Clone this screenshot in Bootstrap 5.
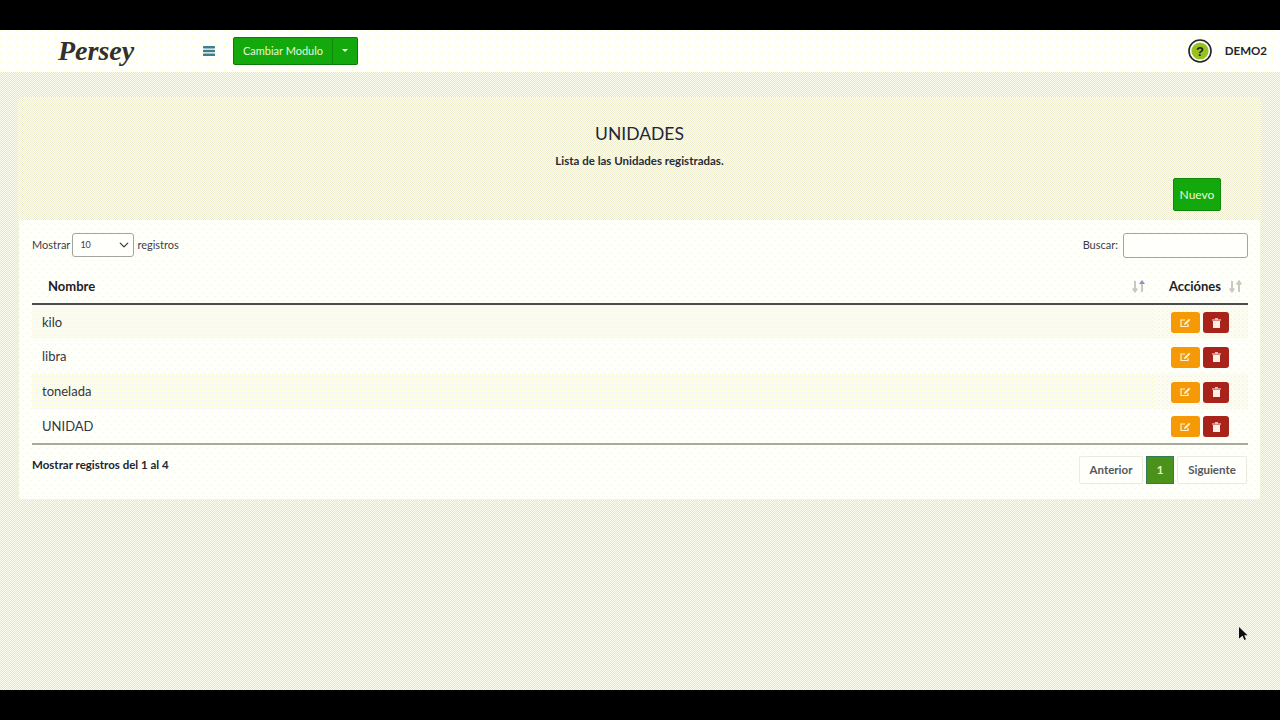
<!DOCTYPE html>
<html lang="es">

<head>
    <meta charset="UTF-8">
    <meta name="viewport" content="width=device-width, initial-scale=1.0">
    <title>Unidades</title>
    <link href="https://cdn.jsdelivr.net/npm/bootstrap@5.3.3/dist/css/bootstrap.min.css" rel="stylesheet">
    <script src="https://cdn.jsdelivr.net/npm/bootstrap@5.3.3/dist/js/bootstrap.bundle.min.js"></script>
    <style>
        html, body { height: 720px; overflow: hidden; }
        body {
            font-family: "Lato", "Noto Sans", sans-serif;
            font-size: 12px;
            color: #2c2f3a;
            background: #000;
            position: relative;
        }
        .black-bar { height: 30px; background: #000; }
        /* the reference is a dithered gif, these tiles copy its speckle */
        .top-nav {
            height: 42px; padding: 0 13px 0 58px;
            background: #fffffd url("data:image/svg+xml,%3Csvg xmlns='http://www.w3.org/2000/svg' width='8' height='8' shape-rendering='crispEdges'%3E%3Crect width='1' height='1' fill='%23fcfcb0'/%3E%3C/svg%3E");
        }
        .brand-text {
            font-family: "Liberation Serif", serif;
            font-style: italic; font-weight: 700;
            font-size: 28px; line-height: 42px; color: #33312c;
            width: 145px;
        }
        .menu-icon { width: 12px; height: 10px; margin-right: 18px; }
        .btn-module {
            background: #13a80c; border: 1px solid #0c7a08; color: #e9f7da;
            font-size: 11px; height: 28px; width: 100px; padding: 0; border-radius: 2px 0 0 2px;
            line-height: 26px;
        }
        .btn-caret {
            background: #13a80c; border: 1px solid #0c7a08; border-left-color: #0e8a09; color: #fff;
            height: 28px; width: 26px; padding: 0 0 2px; border-radius: 0 2px 2px 0; font-size: 10px;
        }
        .btn-caret::after { margin: 0; vertical-align: 2px; }
        .user-name { font-weight: 700; font-size: 11.5px; color: #22242c; margin-left: 13px; }
        .page-area {
            height: 618px; padding: 25px 19px 0 18px;
            background: #eeeedc url("data:image/svg+xml,%3Csvg xmlns='http://www.w3.org/2000/svg' width='4' height='4' shape-rendering='crispEdges'%3E%3Crect width='4' height='4' fill='%23fcfcee'/%3E%3Cg fill='%23e4e4d8'%3E%3Crect x='1' width='1' height='1'/%3E%3Crect y='1' width='1' height='1'/%3E%3Crect x='3' y='2' width='1' height='1'/%3E%3Crect x='2' y='3' width='1' height='1'/%3E%3C/g%3E%3Cg fill='%23eeec9c'%3E%3Crect x='3' width='1' height='1'/%3E%3Crect x='2' y='1' width='1' height='1'/%3E%3Crect x='1' y='2' width='1' height='1'/%3E%3Crect y='3' width='1' height='1'/%3E%3C/g%3E%3C/svg%3E");
        }
        .title-block {
            height: 123px; position: relative; padding-top: 25px; border-radius: 3px 3px 0 0;
            background: #f1f1e0 url("data:image/svg+xml,%3Csvg xmlns='http://www.w3.org/2000/svg' width='4' height='4' shape-rendering='crispEdges'%3E%3Crect width='4' height='4' fill='%23fdfdf2'/%3E%3Cg fill='%23e8e8e4'%3E%3Crect x='1' width='1' height='1'/%3E%3Crect y='1' width='1' height='1'/%3E%3Crect x='3' y='2' width='1' height='1'/%3E%3Crect x='2' y='3' width='1' height='1'/%3E%3C/g%3E%3Cg fill='%23f3f1c0'%3E%3Crect x='3' width='1' height='1'/%3E%3Crect x='2' y='1' width='1' height='1'/%3E%3Crect x='1' y='2' width='1' height='1'/%3E%3Crect y='3' width='1' height='1'/%3E%3C/g%3E%3C/svg%3E");
        }
        .page-title { font-size: 17.5px; font-weight: 400; line-height: 24px; margin: 0 0 6px; color: #23263a; }
        .page-sub { font-size: 11.5px; font-weight: 700; line-height: 17px; margin: 0; color: #2a2c38; }
        .btn-new {
            position: absolute; right: 40px; top: 81px;
            width: 48px; height: 33px; padding: 0; font-size: 12px;
            background: #13a80c; border: 1px solid #0c8a08; color: #e9f7da; border-radius: 2px;
        }
        .list-panel {
            height: 280px; border-radius: 0 0 4px 4px;
            border: 1px solid #f3f3d8; border-top: 0; padding: 13px 13px 0;
            background: #fffffa url("data:image/svg+xml,%3Csvg xmlns='http://www.w3.org/2000/svg' width='8' height='8' shape-rendering='crispEdges'%3E%3Crect width='1' height='1' fill='%23fcfca8'/%3E%3Crect x='4' y='4' width='1' height='1' fill='%23fcfca8'/%3E%3C/svg%3E");
        }
        .tools-row { height: 24px; font-size: 11px; color: #3b3e4a; width: 1216px; }
        .len-select {
            width: 62px; height: 24px; padding: 0 4px 0 7px; font-size: 9px; margin: 0 3px 0 2px;
            border: 1px solid #a3a49c; border-radius: 3px; background-color: #fffffb;
            background-position: right 3px center; background-size: 12px 10px; color: #3b3e4a;
        }
        .search-input {
            width: 125px; height: 25px; margin-left: 5px; padding: 0 4px;
            border: 1px solid #a3a49c; border-radius: 3px; background: #fffffb;
        }
        .units-table { margin: 9px 0 0; width: 1216px; table-layout: fixed; font-size: 13px; color: #33363f; --bs-table-bg: transparent; }
        .units-table th {
            height: 38px; font-size: 13px; font-weight: 700; color: #1e2026;
            border-bottom: 2px solid #4b4c50; vertical-align: middle; padding: 4px 7px 0 16px;
        }
        .units-table th.col-actions { width: 95px; padding-right: 5px; }
        .units-table td { height: 35px; padding: 1px 19px 0 10px; vertical-align: middle; border: 0; }
        .units-table tbody tr:nth-child(odd) td {
            background: #fcfcf0 url("data:image/svg+xml,%3Csvg xmlns='http://www.w3.org/2000/svg' width='4' height='4' shape-rendering='crispEdges'%3E%3Crect width='1' height='1' fill='%23f8f8c8'/%3E%3Crect x='2' y='2' width='1' height='1' fill='%23ecedf0'/%3E%3C/svg%3E");
        }
        .units-table tbody tr:last-child td { border-bottom: 2px solid #a9aa9c; }
        .sort-icon { width: 15px; height: 15px; }
        .btn-act {
            width: 29px; height: 21px; padding: 0; border: 0; border-radius: 3px;
            display: inline-flex; align-items: center; justify-content: center; margin-left: 0;
        }
        .btn-edit { background: #f59a06; }
        .btn-del { background: #a8241a; width: 26px; }
        .foot-row { margin-top: 11px; width: 1216px; padding-right: 1px; }
        .foot-info { font-size: 11.5px; font-weight: 700; color: #23252e; }
        .page-btn {
            height: 28px; font-size: 11.5px; font-weight: 700; color: #55575c; line-height: 26px;
            border: 1px solid #ebebe0; background: #fffffb; border-radius: 2px; text-align: center;
        }
        .page-prev { width: 64px; }
        .page-next { width: 70px; }
        .page-btn.is-active { background: #4a921a; border-color: #2f7a5c; color: #e6f5c8; width: 28px; border-radius: 0; }
        .page-gap { gap: 3px; }
        .mouse-arrow { position: absolute; left: 1239px; top: 627px; width: 10px; height: 14px; }
    </style>
</head>

<body>
    <div class="black-bar"></div>

    <!-- Top bar -->
    <nav class="top-nav d-flex align-items-center">
        <div class="brand-text">Persey</div>
        <svg class="menu-icon" viewBox="0 0 12 10">
            <rect width="12" height="2.4" rx=".6" fill="#3f7f8a" />
            <rect y="3.8" width="12" height="2.4" rx=".6" fill="#3f7f8a" />
            <rect y="7.6" width="12" height="2.4" rx=".6" fill="#3f7f8a" />
        </svg>
        <div class="btn-group">
            <button class="btn btn-module" type="button">Cambiar Modulo</button>
            <button class="btn btn-caret dropdown-toggle" type="button"></button>
        </div>
        <div class="ms-auto d-flex align-items-center">
            <svg width="24" height="24" viewBox="0 0 24 24">
                <circle cx="12" cy="12" r="11" fill="#fff" stroke="#1f2420" stroke-width="1.6" />
                <circle cx="12" cy="12" r="8.6" fill="#97c11f" />
                <text x="12" y="16.5" text-anchor="middle" font-family="Liberation Sans" font-weight="700" font-size="13" fill="#1b1f12">?</text>
            </svg>
            <span class="user-name">DEMO2</span>
        </div>
    </nav>

    <main class="page-area">
        <div class="title-block text-center">
            <h1 class="page-title">UNIDADES</h1>
            <p class="page-sub">Lista de las Unidades registradas.</p>
            <button class="btn btn-new" type="button">Nuevo</button>
        </div>

        <div class="list-panel">
            <div class="tools-row d-flex justify-content-between align-items-center">
                <div class="d-flex align-items-center">
                    Mostrar
                    <select class="form-select len-select">
                        <option>10</option>
                    </select>
                    registros
                </div>
                <div class="d-flex align-items-center">
                    Buscar:
                    <input class="form-control search-input" type="text">
                </div>
            </div>

            <table class="table units-table">
                <thead>
                    <tr>
                        <th>
                            <div class="d-flex justify-content-between align-items-center">
                                Nombre
                                <svg class="sort-icon" viewBox="0 0 15 15">
                                    <path d="M4 2v10M1.8 9.5 4 12.5l2.2-3" fill="none" stroke="#c9cabb" stroke-width="2" />
                                    <path d="M11 1l3 4H8z" fill="#8d8fd0" />
                                    <path d="M11 5v8" stroke="#c9cabb" stroke-width="2" />
                                </svg>
                            </div>
                        </th>
                        <th class="col-actions">
                            <div class="d-flex justify-content-between align-items-center">
                                Acciónes
                                <svg class="sort-icon" viewBox="0 0 15 15">
                                    <path d="M4 2v10M1.8 9.5 4 12.5l2.2-3" fill="none" stroke="#c9cabb" stroke-width="2" />
                                    <path d="M11 13V3M8.8 5.5 11 2.5l2.2 3" fill="none" stroke="#c9cabb" stroke-width="2" />
                                </svg>
                            </div>
                        </th>
                    </tr>
                </thead>
                <tbody id="unit-rows"></tbody>
            </table>

            <div class="foot-row d-flex justify-content-between align-items-start">
                <div class="foot-info">Mostrar registros del 1 al 4</div>
                <div class="d-flex page-gap">
                    <span class="page-btn page-prev">Anterior</span>
                    <span class="page-btn is-active">1</span>
                    <span class="page-btn page-next">Siguiente</span>
                </div>
            </div>
        </div>
    </main>

    <div class="black-bar"></div>

    <svg class="mouse-arrow" viewBox="0 0 10 14">
        <path d="M0 0l8.5 8.2H5.2l1.8 4-1.6.8-1.9-4.2L0 11.5z" fill="#0c0d14" />
    </svg>

    <script>
        const units = ['kilo', 'libra', 'tonelada', 'UNIDAD'];
        const editIcon = '<svg width="11" height="10" viewBox="0 0 11 10"><path d="M8 6v2.5H1V2h4" fill="none" stroke="#fff3d0" stroke-width="1.2"/><path d="M4 7l.5-2L9 .7l1.4 1.4L6 6.5z" fill="#fff3d0"/></svg>';
        const trashIcon = '<svg width="9" height="10" viewBox="0 0 9 10"><path d="M0 1.5h9v1H0zM3 .3h3v1H3zM1 3h7v7H1z" fill="#fdeee6"/></svg>';
        document.getElementById('unit-rows').innerHTML = units.map(name => `
            <tr>
                <td>${name}</td>
                <td class="text-end">
                    <button class="btn btn-act btn-edit" type="button">${editIcon}</button>
                    <button class="btn btn-act btn-del" type="button">${trashIcon}</button>
                </td>
            </tr>`).join('');
    </script>
</body>

</html>
